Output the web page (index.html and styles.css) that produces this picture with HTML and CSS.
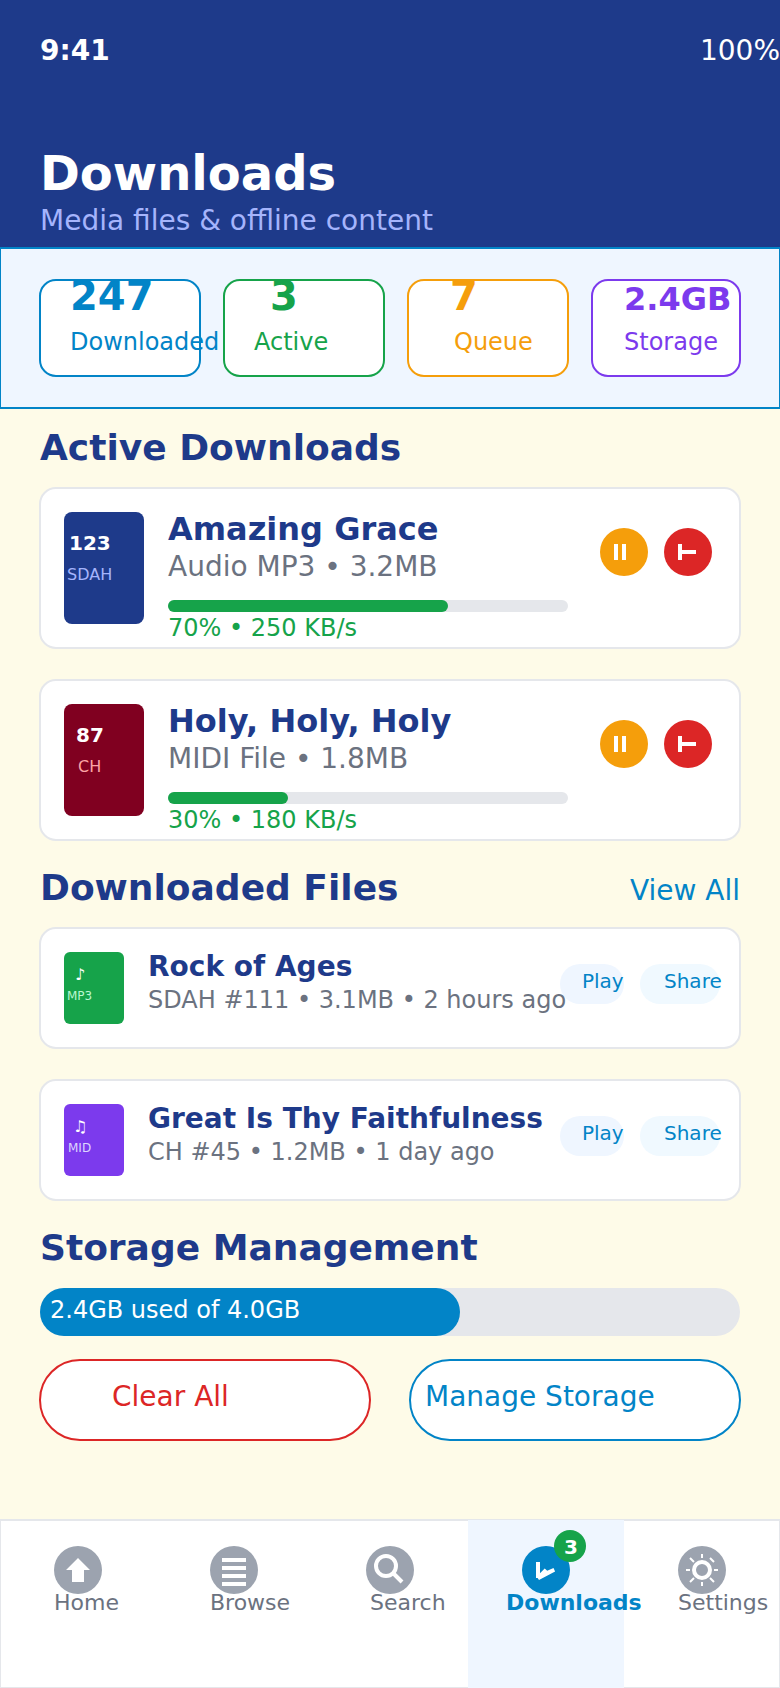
FILE: index.html
```html
<!DOCTYPE html>
<html lang="en">
<head>
<meta charset="utf-8">
<title>Downloads</title>
<link rel="stylesheet" href="styles.css">
</head>
<body>
<div class="app">
  <header class="header">
    <div class="status"><span class="clock">9:41</span><span>100%</span></div>
    <h1 class="title">Downloads</h1>
    <p class="subtitle">Media files &amp; offline content</p>
  </header>

  <section class="stats">
    <div class="stat stat-done"><div class="stat-value">247</div><div class="stat-label">Downloaded</div></div>
    <div class="stat stat-active"><div class="stat-value">3</div><div class="stat-label">Active</div></div>
    <div class="stat stat-queue"><div class="stat-value">7</div><div class="stat-label">Queue</div></div>
    <div class="stat stat-storage"><div class="stat-value">2.4GB</div><div class="stat-label">Storage</div></div>
  </section>

  <main class="content">
    <h2 class="heading">Active Downloads</h2>
    <div class="cards">
      <article class="card task">
        <div class="cover cover-sdah"><div class="cover-num">123</div><div class="cover-book">SDAH</div></div>
        <div class="task-info">
          <h3 class="task-name">Amazing Grace</h3>
          <p class="task-meta">Audio MP3 • 3.2MB</p>
          <div class="track"><div class="track-fill" style="width:70%"></div></div>
          <p class="task-rate">70% • 250 KB/s</p>
        </div>
        <div class="task-actions">
          <svg class="round" viewBox="0 0 48 48"><circle cx="24" cy="24" r="24" fill="#f59e0b"/><path d="M14 16h4v16h-4zM22 16h4v16h-4z" fill="#fff"/></svg>
          <svg class="round" viewBox="0 0 48 48"><circle cx="24" cy="24" r="24" fill="#dc2626"/><path d="M14 16h4v6h14v4H18v6h-4z" fill="#fff"/></svg>
        </div>
      </article>
      <article class="card task">
        <div class="cover cover-ch"><div class="cover-num">87</div><div class="cover-book">CH</div></div>
        <div class="task-info">
          <h3 class="task-name">Holy, Holy, Holy</h3>
          <p class="task-meta">MIDI File • 1.8MB</p>
          <div class="track"><div class="track-fill" style="width:30%"></div></div>
          <p class="task-rate">30% • 180 KB/s</p>
        </div>
        <div class="task-actions">
          <svg class="round" viewBox="0 0 48 48"><circle cx="24" cy="24" r="24" fill="#f59e0b"/><path d="M14 16h4v16h-4zM22 16h4v16h-4z" fill="#fff"/></svg>
          <svg class="round" viewBox="0 0 48 48"><circle cx="24" cy="24" r="24" fill="#dc2626"/><path d="M14 16h4v6h14v4H18v6h-4z" fill="#fff"/></svg>
        </div>
      </article>
    </div>

    <div class="heading-row"><h2 class="heading">Downloaded Files</h2><a class="view-all">View All</a></div>
    <div class="cards">
      <article class="card file">
        <div class="thumb thumb-mp3"><div class="thumb-note">♪</div><div class="thumb-type">MP3</div></div>
        <div class="file-info"><h3 class="file-name">Rock of Ages</h3><p class="file-meta">SDAH #111 • 3.1MB • 2 hours ago</p></div>
        <div class="file-actions"><span class="pill pill-play">Play</span><span class="pill pill-share">Share</span></div>
      </article>
      <article class="card file">
        <div class="thumb thumb-mid"><div class="thumb-note">♫</div><div class="thumb-type">MID</div></div>
        <div class="file-info"><h3 class="file-name">Great Is Thy Faithfulness</h3><p class="file-meta">CH #45 • 1.2MB • 1 day ago</p></div>
        <div class="file-actions"><span class="pill pill-play">Play</span><span class="pill pill-share">Share</span></div>
      </article>
    </div>

    <h2 class="heading heading-storage">Storage Management</h2>
    <div class="usage"><div class="usage-fill" style="width:60%">2.4GB used of 4.0GB</div></div>
    <div class="buttons"><div class="button button-clear">Clear All</div><div class="button button-manage">Manage Storage</div></div>
  </main>

  <nav class="nav">
    <div class="tab tab-home">
      <svg class="round" viewBox="0 0 48 48"><circle cx="24" cy="24" r="24" fill="#9ca3af"/><path d="M24 12l12 12h-6v12H18V24h-6z" fill="#fff"/></svg>
      <span class="tab-label">Home</span>
    </div>
    <div class="tab tab-browse">
      <svg class="round" viewBox="0 0 48 48"><circle cx="24" cy="24" r="24" fill="#9ca3af"/><path d="M12 12h24v4H12zM12 20h24v4H12zM12 28h24v4H12zM12 36h24v4H12z" fill="#fff"/></svg>
      <span class="tab-label">Browse</span>
    </div>
    <div class="tab tab-search">
      <svg class="round" viewBox="0 0 48 48"><circle cx="24" cy="24" r="24" fill="#9ca3af"/><g fill="none" stroke="#fff" stroke-width="4"><circle cx="20" cy="20" r="10"/><path d="M27 27l9 9"/></g></svg>
      <span class="tab-label">Search</span>
    </div>
    <div class="tab tab-downloads">
      <svg class="round" viewBox="0 0 48 48"><circle cx="24" cy="24" r="24" fill="#0284c7"/><path d="M14 16h4v11.3l4.7-4.8 2.5 2.2 6.3-2.6 1.6 3.3L17 34l-1.4-2H14z" fill="#fff"/></svg>
      <span class="badge">3</span>
      <span class="tab-label">Downloads</span>
    </div>
    <div class="tab tab-settings">
      <svg class="round" viewBox="0 0 48 48"><circle cx="24" cy="24" r="24" fill="#9ca3af"/><g fill="none" stroke="#fff"><circle cx="24" cy="24" r="8" stroke-width="4"/><path stroke-width="2" d="M24 8v4M24 36v4M8 24h4M36 24h4M12 12l4 4M32 32l4 4M12 36l4-4M32 12l4 4"/></g></svg>
      <span class="tab-label">Settings</span>
    </div>
  </nav>
</div>
</body>
</html>
```
FILE: styles.css
```css
* { box-sizing: border-box; margin: 0; padding: 0; }
body { font-family: "DejaVu Sans", sans-serif; white-space: nowrap; }
svg { display: block; }
.app { width: 780px; height: 1688px; overflow: hidden; display: flex; flex-direction: column; background: #fefbe8; }

.header { height: 247px; flex: none; padding: 34px 0 0 40px; background: #1e3a8a; color: #fff; }
.status { display: flex; justify-content: space-between; font-size: 28px; line-height: 33px; }
.clock { font-weight: 700; }
.title { margin-top: 78px; font-size: 48px; line-height: 56px; }
.subtitle { margin-top: 3px; font-size: 28px; line-height: 33px; color: #a5b4fc; }

.stats { flex: none; height: 162px; display: grid; grid-template-columns: 162px 162px 162px 150px; column-gap: 22px; padding: 30px 38px; background: #eff6ff; border: solid #0284c7; border-width: 2px 1px; }
.stat { height: 98px; background: #fff; border: 2px solid; border-radius: 17px; }
.stat-value { margin-top: -8px; height: 46px; font-size: 40px; line-height: 46px; font-weight: 700; }
.stat-label { margin-top: 9px; font-size: 24px; line-height: 28px; }
.stat-done { color: #0284c7; padding-left: 29px; }
.stat-active { color: #16a34a; padding-left: 29px; }
.stat-active .stat-value { padding-left: 16px; }
.stat-queue { color: #f59e0b; padding-left: 41px; }
.stat-queue .stat-label { padding-left: 4px; }
.stat-storage { color: #7c3aed; padding-left: 31px; }
.stat-storage .stat-value { font-size: 32px; line-height: 52px; }

.content { flex: none; height: 1110px; padding: 18px 39px 0; }
.heading { padding-left: 1px; font-size: 36px; line-height: 41px; color: #1e3a8a; }
.heading-row { display: flex; justify-content: space-between; align-items: baseline; margin-top: 26px; }
.view-all { padding-right: 1px; font-size: 28px; line-height: 33px; color: #0284c7; }
.cards { display: flex; flex-direction: column; gap: 30px; margin-top: 19px; }
.card { display: flex; background: #fff; border: 2px solid #e5e7eb; border-radius: 17px; padding: 23px; }

.task { height: 162px; }
.cover { flex: none; width: 80px; height: 112px; padding-top: 19px; border-radius: 8px; color: #fff; }
.cover-num { font-size: 20px; line-height: 24px; font-weight: 700; }
.cover-book { margin-top: 10px; font-size: 16px; line-height: 19px; }
.cover-sdah { background: #1e3a8a; padding-left: 3px; }
.cover-sdah .cover-num { padding-left: 2px; }
.cover-sdah .cover-book { color: #a5b4fc; }
.cover-ch { background: #800020; padding-left: 12px; }
.cover-ch .cover-book { padding-left: 2px; color: #fca5a5; }
.task-info { flex: none; width: 400px; margin-left: 24px; }
.task-name { margin-top: -2px; font-size: 32px; line-height: 38px; color: #1e3a8a; }
.task-meta { margin-top: 2px; font-size: 28px; line-height: 33px; color: #6b7280; }
.track { height: 12px; margin-top: 17px; border-radius: 6px; background: #e5e7eb; }
.track-fill { height: 12px; border-radius: 6px; background: #16a34a; }
.task-rate { margin-top: 2px; font-size: 24px; line-height: 28px; color: #16a34a; }
.task-actions { display: flex; gap: 16px; margin: 16px 0 0 32px; }
.round { flex: none; width: 48px; height: 48px; }

.file { height: 122px; }
.thumb { flex: none; width: 60px; height: 72px; padding: 13px 0 0 3px; border-radius: 6px; color: #fff; }
.thumb-note { height: 19px; padding-left: 8px; font-size: 16px; line-height: 19px; }
.thumb-type { margin-top: 5px; font-size: 12px; line-height: 14px; }
.thumb-mp3 { background: #16a34a; }
.thumb-mp3 .thumb-type { color: #bbf7d0; }
.thumb-mid { background: #7c3aed; }
.thumb-mid .thumb-note { padding-left: 6px; }
.thumb-mid .thumb-type { padding-left: 1px; color: #ddd6fe; }
.file-info { flex: none; position: relative; z-index: 1; width: 412px; margin-left: 24px; }
.file-name { margin-top: -2px; font-size: 28px; line-height: 33px; color: #1e3a8a; }
.file-meta { margin-top: 3px; font-size: 24px; line-height: 28px; color: #6b7280; }
.file-actions { flex: none; display: flex; gap: 16px; margin-top: 12px; }
.pill { height: 40px; padding-top: 5px; border-radius: 20px; font-size: 20px; line-height: 24px; color: #0284c7; }
.pill-play { width: 64px; padding-left: 22px; background: #eff6ff; }
.pill-share { width: 80px; padding-left: 24px; background: #f0f9ff; }

.heading-storage { margin-top: 26px; }
.usage { height: 48px; margin: 20px 1px 0; border-radius: 24px; background: #e5e7eb; }
.usage-fill { height: 48px; padding: 8px 0 0 10px; border-radius: 24px; background: #0284c7; color: #fff; font-size: 24px; line-height: 28px; }
.buttons { display: flex; justify-content: space-between; margin-top: 23px; }
.button { width: 332px; height: 82px; padding-top: 19px; border: 2px solid; border-radius: 41px; background: #fff; font-size: 28px; line-height: 33px; }
.button-clear { padding-left: 71px; color: #dc2626; }
.button-manage { padding-left: 14px; color: #0284c7; }

.nav { flex: none; height: 169px; display: grid; grid-template-columns: repeat(5, 156px); background: #fff; box-shadow: inset 0 2px #e5e7eb, inset 1px 0 #e5e7eb, inset -1px -1px #e5e7eb; }
.tab { position: relative; padding: 27px 0 0 54px; color: #6b7280; }
.tab-label { display: block; margin-top: -4px; font-size: 22px; line-height: 25px; position: relative; z-index: 1; }
.tab-search .tab-label { margin-left: 4px; }
.tab-downloads { margin-top: 1px; padding-top: 26px; background: #eff6ff; color: #0284c7; }
.tab-downloads .tab-label { margin-left: -16px; font-weight: 700; }
.badge { position: absolute; left: 86px; top: 10px; width: 32px; height: 32px; padding: 5px 0 0 10px; border-radius: 50%; background: #16a34a; color: #fff; font-size: 20px; line-height: 24px; font-weight: 700; }
```
